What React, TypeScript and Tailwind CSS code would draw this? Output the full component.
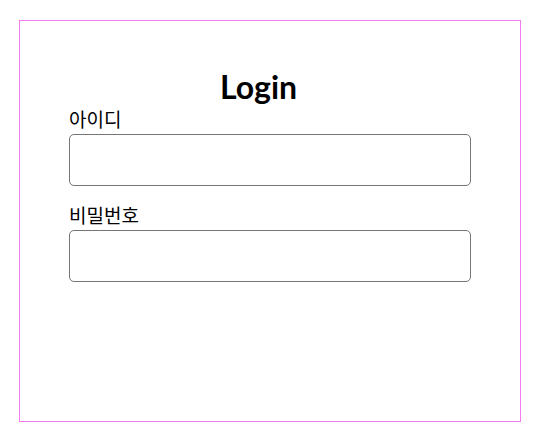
export default function App() {
  return (
    <div
      className="ml-[19px] mt-[20px] h-[402px] w-[502px] border border-[#f07cf0] bg-white text-black"
      style={{ fontFamily: 'Lato, "Noto Sans CJK KR", sans-serif' }}
    >
      <div className="flex flex-col items-center pt-[47px]">
        <form className="flex w-[402px] flex-col">
          {/* title sits a little left of centre in the original */}
          <h1 className="pr-[23px] text-center text-[32px] font-bold leading-[38px]">Login</h1>
          <label
            className="mb-[2px] text-[19px] leading-[26px]"
            style={{ fontFamily: '"Noto Sans CJK KR", sans-serif' }}
          >
            아이디
          </label>
          <input
            type="text"
            className="h-[52px] w-full rounded-[5px] border border-[#767676] px-2"
          />
          <label
            className="mb-[2px] mt-[16px] text-[19px] leading-[26px]"
            style={{ fontFamily: '"Noto Sans CJK KR", sans-serif' }}
          >
            비밀번호
          </label>
          <input
            type="password"
            className="h-[52px] w-full rounded-[5px] border border-[#767676] px-2"
          />
        </form>
      </div>
    </div>
  );
}
